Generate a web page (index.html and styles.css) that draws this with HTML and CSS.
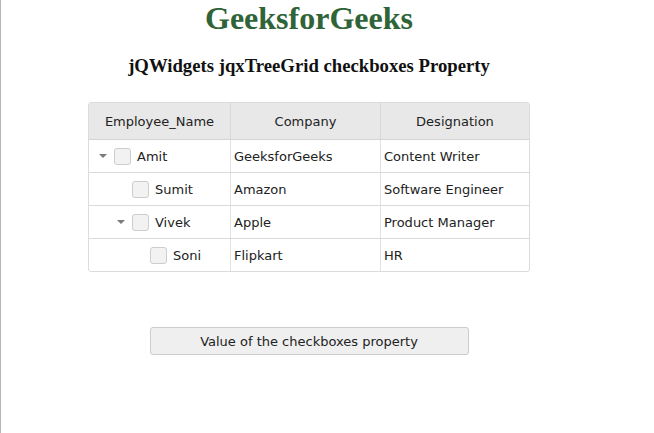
FILE: index.html
```html
<!DOCTYPE html>
<html>
<head>
<meta charset="utf-8">
<link rel="stylesheet" href="styles.css">
</head>
<body>
<div class="page">
  <h1 class="title">GeeksforGeeks</h1>
  <h3 class="subtitle">jQWidgets jqxTreeGrid checkboxes Property</h3>
  <div class="grid">
    <div class="row head">
      <div class="cell">Employee_Name</div>
      <div class="cell">Company</div>
      <div class="cell">Designation</div>
    </div>
    <div class="row">
      <div class="cell name"><span class="toggle"><span class="arrow"></span></span><span class="check"></span>Amit</div>
      <div class="cell">GeeksforGeeks</div>
      <div class="cell">Content Writer</div>
    </div>
    <div class="row">
      <div class="cell name"><span class="indent"></span><span class="toggle"></span><span class="check"></span>Sumit</div>
      <div class="cell">Amazon</div>
      <div class="cell">Software Engineer</div>
    </div>
    <div class="row">
      <div class="cell name"><span class="indent"></span><span class="toggle"><span class="arrow"></span></span><span class="check"></span>Vivek</div>
      <div class="cell">Apple</div>
      <div class="cell">Product Manager</div>
    </div>
    <div class="row last">
      <div class="cell name"><span class="indent"></span><span class="indent"></span><span class="toggle"></span><span class="check"></span>Soni</div>
      <div class="cell">Flipkart</div>
      <div class="cell">HR</div>
    </div>
  </div>
  <div class="actions">
    <button class="btn" type="button">Value of the checkboxes property</button>
  </div>
</div>
</body>
</html>
```
FILE: styles.css
```css
html, body {
  margin: 0;
  padding: 0;
  background: #ffffff;
}
body {
  min-height: 433px;
  border-left: 1px solid #b4b6b6;
  box-sizing: border-box;
}
.page {
  width: 616px;
  text-align: center;
}
.title {
  margin: 0;
  font-family: "Liberation Serif", serif;
  font-size: 32px;
  line-height: 36px;
  font-weight: bold;
  color: #2f6438;
}
.subtitle {
  margin: 19px 0 0;
  font-family: "Liberation Serif", serif;
  font-size: 18.72px;
  line-height: 22px;
  font-weight: bold;
  color: #111;
}
.grid {
  width: 442px;
  box-sizing: border-box;
  margin: 25px auto 0;
  border: 1px solid #dcdcdc;
  border-radius: 3px;
  overflow: hidden;
  text-align: left;
  font-family: "DejaVu Sans", Verdana, sans-serif;
  font-size: 13px;
  color: #222;
}
.row {
  display: grid;
  grid-template-columns: 141px 150px 149px;
  height: 33px;
  border-bottom: 1px solid #dadada;
  box-sizing: border-box;
}
.row.last {
  border-bottom: none;
  height: 32px;
}
.row.head {
  height: 37px;
  background: #e8e8e8;
  border-bottom: 1px solid #d4d4d4;
}
.cell {
  display: flex;
  align-items: center;
  padding-left: 3px;
  border-left: 1px solid #e2e2e2;
  white-space: nowrap;
}
.cell:first-child {
  border-left: none;
  padding-left: 5px;
}
.head .cell {
  justify-content: center;
  padding-left: 0;
  border-left-color: #d8d8d8;
}
.indent {
  width: 18px;
  flex: none;
}
.toggle {
  width: 20px;
  height: 16px;
  flex: none;
  display: flex;
  align-items: center;
}
.arrow {
  margin-left: 5px;
  width: 0;
  height: 0;
  border-left: 4px solid transparent;
  border-right: 4px solid transparent;
  border-top: 4px solid #7a7a7a;
}
.check {
  width: 15px;
  height: 15px;
  flex: none;
  border: 1px solid #cdcdcd;
  border-radius: 3px;
  background: #f2f2f2;
  margin-right: 6px;
}
.actions {
  margin-top: 55px;
  display: flex;
  justify-content: center;
}
.btn {
  width: 319px;
  height: 28px;
  box-sizing: border-box;
  border: 1px solid #cccccc;
  border-radius: 3px;
  background: #efefef;
  font-family: "DejaVu Sans", Verdana, sans-serif;
  font-size: 13px;
  color: #222;
  padding: 0;
}
```
